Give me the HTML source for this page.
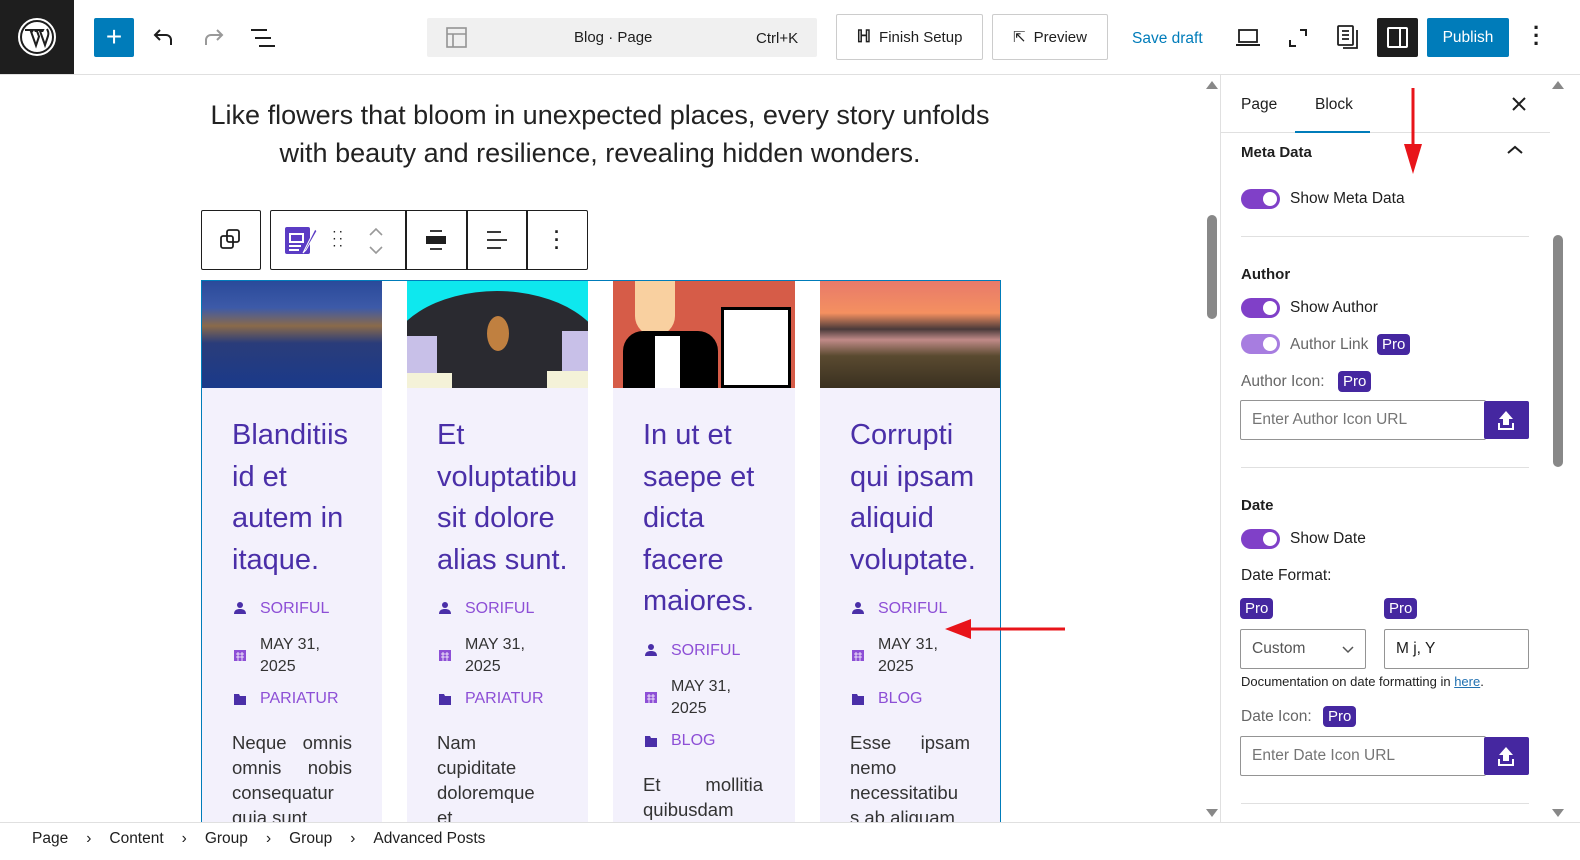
<!DOCTYPE html>
<html><head><meta charset="utf-8"><style>
*{box-sizing:border-box;margin:0;padding:0}
body{width:1580px;height:860px;overflow:hidden;background:#fff;font-family:"Liberation Sans",sans-serif;color:#1e1e1e;position:relative}
.a{position:absolute}
.btn{position:absolute;border:1px solid #ccc;border-radius:2px;font-size:15px;display:flex;align-items:center;justify-content:center;gap:8px;color:#1e1e1e}
.card{position:absolute;top:281px;height:541px;background:#f3f1fc;overflow:hidden}
.img{height:107px;width:100%;position:relative;overflow:hidden}
.t{position:absolute;left:30px;font-size:29px;line-height:41.5px;color:#4a2fa8;white-space:nowrap}
.m{position:absolute;left:58px;font-size:16px;color:#8d4fd6;line-height:20px}
.d{color:#333}
.ic{position:absolute;left:31px;width:14px;height:12px}
.ex{position:absolute;left:30px;width:120px;font-size:18.5px;line-height:25px;color:#333;text-align:justify;overflow-wrap:anywhere}
.tog{position:absolute;left:1241px;width:39px;height:20px;border-radius:10px;background:#8040c8}
.tog:after{content:"";position:absolute;right:3px;top:3px;width:14px;height:14px;border-radius:50%;background:#fff}
.sl{position:absolute;left:1290px;font-size:15.5px;color:#1e1e1e}
.h{position:absolute;left:1241px;font-size:15px;font-weight:bold;color:#1e1e1e}
.pro{position:absolute;background:#4527a0;color:#fff;font-size:15px;border-radius:4px;padding:1px 5px;line-height:19px}
.inp{position:absolute;border:1px solid #949494;border-radius:2px;font-size:15.5px;color:#757575;padding-left:11px;display:flex;align-items:center;background:#fff}
.up{position:absolute;width:45px;height:38px;background:#4527a0;border-radius:2px}
.sep{position:absolute;left:1241px;width:288px;height:1px;background:#e0e0e0}
</style></head><body>
<!-- top bar -->
<div class="a" style="left:0;top:0;width:74px;height:74px;background:#1e1e1e"></div>
<svg class="a" style="left:17px;top:17px" width="40" height="40" viewBox="0 0 40 40"><circle cx="20" cy="20" r="18" fill="none" stroke="#fff" stroke-width="2"/><circle cx="20" cy="20" r="15" fill="#fff"/><path d="M8 13h8l-1 1.5h-1l5 14 3-9-2-5.5h-1.5l-.5-1h8l-.5 1H23l5 14 3-9c1-3 0-5-1-7" fill="none" stroke="#1e1e1e" stroke-width="2"/></svg>
<div class="a" style="left:0;top:74px;width:1580px;height:1px;background:#e0e0e0"></div>
<div class="a" style="left:94px;top:18px;width:40px;height:39px;background:#007cba;border-radius:2px;color:#fff;font-size:28px;text-align:center;line-height:37px">+</div>
<svg class="a" style="left:152px;top:27px" width="24" height="22" viewBox="0 0 24 22"><path d="M8 3L3 8l5 5M3 8h11a5 5 0 0 1 5 5v5" fill="none" stroke="#1e1e1e" stroke-width="2"/></svg>
<svg class="a" style="left:201px;top:27px" width="24" height="22" viewBox="0 0 24 22"><path d="M16 3l5 5-5 5M21 8H10a5 5 0 0 0-5 5v5" fill="none" stroke="#999" stroke-width="2"/></svg>
<svg class="a" style="left:250px;top:28px" width="26" height="20" viewBox="0 0 26 20"><path d="M1 2h16M5 10h16M9 18h16" stroke="#1e1e1e" stroke-width="2"/></svg>
<div class="a" style="left:427px;top:18px;width:390px;height:39px;background:#f0f0f0;border-radius:2px"></div>
<svg class="a" style="left:446px;top:27px" width="22" height="22" viewBox="0 0 22 22"><rect x="1" y="1" width="19" height="19" fill="none" stroke="#949494" stroke-width="1.6"/><path d="M1 7h19M7 7v13" stroke="#949494" stroke-width="1.6"/></svg>
<div class="a" style="left:574px;top:29px;font-size:15px">Blog · Page</div>
<div class="a" style="left:756px;top:30px;font-size:15px">Ctrl+K</div>
<div class="btn" style="left:836px;top:14px;width:147px;height:46px"><span style="font-weight:bold;font-size:17px">ℍ</span>Finish Setup</div>
<div class="btn" style="left:992px;top:14px;width:116px;height:46px"><span style="font-size:15px">⇱</span>Preview</div>
<div class="a" style="left:1132px;top:30px;font-size:15.5px;color:#007cba">Save draft</div>
<svg class="a" style="left:1236px;top:28px" width="24" height="20" viewBox="0 0 24 20"><rect x="3" y="2" width="18" height="12" fill="none" stroke="#1e1e1e" stroke-width="1.8"/><path d="M0 17h24" stroke="#1e1e1e" stroke-width="2"/></svg>
<svg class="a" style="left:1288px;top:28px" width="20" height="20" viewBox="0 0 20 20"><path d="M12 2h6v6M8 18H2v-6" fill="none" stroke="#1e1e1e" stroke-width="2"/></svg>
<svg class="a" style="left:1336px;top:25px" width="24" height="26" viewBox="0 0 24 26"><rect x="2" y="1" width="15" height="19" rx="1" fill="none" stroke="#1e1e1e" stroke-width="1.8"/><path d="M6 6h7M6 10h7M6 14h7M21 5v18H7" fill="none" stroke="#1e1e1e" stroke-width="1.8"/></svg>
<div class="a" style="left:1377px;top:18px;width:41px;height:39px;background:#1e1e1e;border-radius:2px"></div>
<svg class="a" style="left:1387px;top:27px" width="22" height="22" viewBox="0 0 22 22"><rect x="1" y="1" width="19" height="19" rx="1" fill="none" stroke="#fff" stroke-width="2"/><path d="M13 1v19" stroke="#fff" stroke-width="2"/></svg>
<div class="a" style="left:1427px;top:18px;width:82px;height:39px;background:#007cba;border-radius:2px;color:#fff;font-size:15.5px;text-align:center;line-height:39px">Publish</div>
<div class="a" style="left:1533px;top:24px;font-size:22px;font-weight:bold;line-height:8px">·<br>·<br>·</div>

<!-- canvas -->
<div class="a" style="left:150px;top:96px;width:900px;text-align:center;font-size:27px;line-height:38px;color:#222">Like flowers that bloom in unexpected places, every story unfolds<br>with beauty and resilience, revealing hidden wonders.</div>
<div class="a" style="left:201px;top:210px;width:60px;height:60px;border:1.5px solid #1e1e1e;border-radius:2px"></div>
<svg class="a" style="left:220px;top:229px" width="22" height="22" viewBox="0 0 22 22"><rect x="1" y="7" width="12" height="12" rx="2" fill="none" stroke="#1e1e1e" stroke-width="1.8"/><rect x="7" y="1" width="12" height="12" rx="2" fill="none" stroke="#1e1e1e" stroke-width="1.8"/></svg>
<div class="a" style="left:270px;top:210px;width:318px;height:60px;border:1.5px solid #1e1e1e;border-radius:2px"></div>
<div class="a" style="left:405px;top:211px;width:1.5px;height:58px;background:#1e1e1e"></div>
<div class="a" style="left:466px;top:211px;width:1.5px;height:58px;background:#1e1e1e"></div>
<div class="a" style="left:526px;top:211px;width:1.5px;height:58px;background:#1e1e1e"></div>
<svg class="a" style="left:285px;top:225px" width="32" height="30" viewBox="0 0 32 30"><rect x="0" y="2" width="25" height="27" rx="2" fill="#5b3cc4"/><rect x="4" y="8" width="15" height="10" fill="#fff"/><rect x="6" y="10" width="11" height="6" fill="#5b3cc4"/><path d="M4 21h12M4 25h10" stroke="#fff" stroke-width="2"/><path d="M30 4L20 24l-2 4 3-3 11-19z" fill="#5b3cc4" stroke="#fff" stroke-width="1"/></svg>
<div class="a" style="left:333px;top:229px;font-size:10px;line-height:7px;letter-spacing:3px;font-weight:bold">··<br>··<br>··</div>
<svg class="a" style="left:367px;top:226px" width="18" height="30" viewBox="0 0 18 30"><path d="M3 9l6-6 6 6M3 21l6 6 6-6" fill="none" stroke="#999" stroke-width="1.6"/></svg>
<svg class="a" style="left:425px;top:229px" width="22" height="22" viewBox="0 0 22 22"><path d="M5 2h12M5 20h12" stroke="#1e1e1e" stroke-width="1.8"/><rect x="1" y="7" width="20" height="8" fill="#1e1e1e"/></svg>
<svg class="a" style="left:486px;top:229px" width="22" height="22" viewBox="0 0 22 22"><path d="M1 3h14M1 11h20M1 19h14" stroke="#1e1e1e" stroke-width="1.8"/></svg>
<div class="a" style="left:554px;top:228px;font-size:18px;line-height:8px;font-weight:bold">·<br>·<br>·</div>

<div class="a" style="left:201px;top:280px;width:800px;height:542px;border:1.5px solid #007cba;border-bottom:none"></div>

<div class="card" style="left:202px;width:180px">
 <div class="img" style="background:linear-gradient(180deg,#2a4a9a 0%,#3d5aa8 25%,#8a6a4a 42%,#2a3c7a 58%,#1a3a8a 100%)"></div>
 <div class="t" style="top:134px">Blanditiis<br>id et<br>autem in<br>itaque.</div>
 <svg class="ic" style="top:321px" viewBox="0 0 14 12"><circle cx="7" cy="3" r="3" fill="#4a2fa8"/><path d="M1 12c0-4 3-5 6-5s6 1 6 5z" fill="#4a2fa8"/></svg><div class="m" style="top:318px">SORIFUL</div>
 <svg class="ic" style="top:368px" viewBox="0 0 14 12"><rect x="1" y="1" width="12" height="11" fill="#8d4fd6"/><path d="M3 5h8M3 8h8M5 3v9M9 3v9" stroke="#fff" stroke-width=".8"/></svg><div class="m d" style="top:353px;line-height:22px">MAY 31,<br>2025</div>
 <svg class="ic" style="top:412px" viewBox="0 0 14 12"><path d="M1 1h5l1 2h6v9H1z" fill="#4a2fa8"/></svg><div class="m" style="top:408px">PARIATUR</div>
 <div class="ex" style="top:449px">Neque omnis omnis nobis consequatur quia sunt</div>
</div>
<div class="card" style="left:407px;width:181px">
 <div class="img" style="background:#0ee8ee">
  <div class="a" style="left:-20px;top:10px;width:220px;height:140px;background:#2a2a30;border-radius:50%"></div>
  <div class="a" style="left:0;top:55px;width:30px;height:45px;background:#c8c0e8"></div>
  <div class="a" style="left:155px;top:50px;width:26px;height:45px;background:#c8c0e8"></div>
  <div class="a" style="left:0;top:92px;width:45px;height:15px;background:#f4f2d8"></div>
  <div class="a" style="left:140px;top:90px;width:41px;height:17px;background:#f4f2d8"></div>
  <div class="a" style="left:80px;top:35px;width:22px;height:35px;background:#c08040;border-radius:50%"></div>
 </div>
 <div class="t" style="top:134px">Et<br>voluptatibu<br>sit dolore<br>alias sunt.</div>
 <svg class="ic" style="top:321px" viewBox="0 0 14 12"><circle cx="7" cy="3" r="3" fill="#4a2fa8"/><path d="M1 12c0-4 3-5 6-5s6 1 6 5z" fill="#4a2fa8"/></svg><div class="m" style="top:318px">SORIFUL</div>
 <svg class="ic" style="top:368px" viewBox="0 0 14 12"><rect x="1" y="1" width="12" height="11" fill="#8d4fd6"/><path d="M3 5h8M3 8h8M5 3v9M9 3v9" stroke="#fff" stroke-width=".8"/></svg><div class="m d" style="top:353px;line-height:22px">MAY 31,<br>2025</div>
 <svg class="ic" style="top:412px" viewBox="0 0 14 12"><path d="M1 1h5l1 2h6v9H1z" fill="#4a2fa8"/></svg><div class="m" style="top:408px">PARIATUR</div>
 <div class="ex" style="top:449px;text-align:left">Nam<br>cupiditate<br>doloremque<br>et</div>
</div>
<div class="card" style="left:613px;width:182px">
 <div class="img" style="background:#d65c48">
  <div class="a" style="left:22px;top:0;width:40px;height:55px;background:#f9d0a0;border-radius:0 0 20px 20px"></div>
  <div class="a" style="left:10px;top:50px;width:95px;height:57px;background:#000;border-radius:20px 20px 0 0"></div>
  <div class="a" style="left:42px;top:55px;width:25px;height:52px;background:#fff"></div>
  <div class="a" style="left:108px;top:26px;width:70px;height:81px;background:#fff;border:3px solid #000"></div>
 </div>
 <div class="t" style="top:134px">In ut et<br>saepe et<br>dicta<br>facere<br>maiores.</div>
 <svg class="ic" style="top:363px" viewBox="0 0 14 12"><circle cx="7" cy="3" r="3" fill="#4a2fa8"/><path d="M1 12c0-4 3-5 6-5s6 1 6 5z" fill="#4a2fa8"/></svg><div class="m" style="top:360px">SORIFUL</div>
 <svg class="ic" style="top:410px" viewBox="0 0 14 12"><rect x="1" y="1" width="12" height="11" fill="#8d4fd6"/><path d="M3 5h8M3 8h8M5 3v9M9 3v9" stroke="#fff" stroke-width=".8"/></svg><div class="m d" style="top:395px;line-height:22px">MAY 31,<br>2025</div>
 <svg class="ic" style="top:454px" viewBox="0 0 14 12"><path d="M1 1h5l1 2h6v9H1z" fill="#4a2fa8"/></svg><div class="m" style="top:450px">BLOG</div>
 <div class="ex" style="top:491px">Et mollitia quibusdam</div>
</div>
<div class="card" style="left:820px;width:180px">
 <div class="img" style="background:linear-gradient(180deg,#e87a6a 0%,#f49060 30%,#4a3a3a 45%,#c08a88 55%,#5a4a30 70%,#3a3020 100%)"></div>
 <div class="t" style="top:134px">Corrupti<br>qui ipsam<br>aliquid<br>voluptate.</div>
 <svg class="ic" style="top:321px" viewBox="0 0 14 12"><circle cx="7" cy="3" r="3" fill="#4a2fa8"/><path d="M1 12c0-4 3-5 6-5s6 1 6 5z" fill="#4a2fa8"/></svg><div class="m" style="top:318px">SORIFUL</div>
 <svg class="ic" style="top:368px" viewBox="0 0 14 12"><rect x="1" y="1" width="12" height="11" fill="#8d4fd6"/><path d="M3 5h8M3 8h8M5 3v9M9 3v9" stroke="#fff" stroke-width=".8"/></svg><div class="m d" style="top:353px;line-height:22px">MAY 31,<br>2025</div>
 <svg class="ic" style="top:412px" viewBox="0 0 14 12"><path d="M1 1h5l1 2h6v9H1z" fill="#4a2fa8"/></svg><div class="m" style="top:408px">BLOG</div>
 <div class="ex" style="top:449px">Esse ipsam nemo necessitatibu s ab aliquam</div>
</div>
<!-- red arrow -->
<svg class="a" style="left:945px;top:617px" width="122" height="24" viewBox="0 0 122 24"><path d="M120 12H20" stroke="#e8141a" stroke-width="3"/><path d="M0 12l26-10v20z" fill="#e8141a"/></svg>

<!-- canvas scrollbar -->
<svg class="a" style="left:1205px;top:80px" width="14" height="10"><path d="M1 9l6-8 6 8z" fill="#888"/></svg>
<div class="a" style="left:1207px;top:215px;width:10px;height:104px;background:#888;border-radius:5px"></div>
<svg class="a" style="left:1205px;top:808px" width="14" height="10"><path d="M1 1l6 8 6-8z" fill="#888"/></svg>
<div class="a" style="left:1220px;top:75px;width:1px;height:747px;background:#e0e0e0"></div>

<!-- sidebar -->
<div class="a" style="left:1241px;top:96px;font-size:15.5px">Page</div>
<div class="a" style="left:1315px;top:96px;font-size:15.5px">Block</div>
<div class="a" style="left:1221px;top:132px;width:329px;height:1px;background:#e0e0e0"></div>
<div class="a" style="left:1295px;top:131px;width:75px;height:2px;background:#007cba"></div>
<svg class="a" style="left:1512px;top:97px" width="14" height="14"><path d="M1 1l12 12M13 1L1 13" stroke="#1e1e1e" stroke-width="2"/></svg>
<svg class="a" style="left:1403px;top:88px" width="20" height="86"><path d="M10 0v60" stroke="#e8141a" stroke-width="3"/><path d="M1 56h18l-9 30z" fill="#e8141a"/></svg>
<div class="h" style="top:144px">Meta Data</div>
<svg class="a" style="left:1507px;top:145px" width="16" height="10"><path d="M1 8l7-6 7 6" fill="none" stroke="#1e1e1e" stroke-width="2"/></svg>
<div class="tog" style="top:189px"></div><div class="sl" style="top:190px">Show Meta Data</div>
<div class="sep" style="top:236px"></div>
<div class="h" style="top:266px">Author</div>
<div class="tog" style="top:298px"></div><div class="sl" style="top:299px">Show Author</div>
<div class="tog" style="top:334px;background:#a77de0"></div><div class="sl" style="top:336px;color:#666">Author Link</div>
<div class="pro" style="left:1377px;top:334px">Pro</div>
<div class="sl" style="left:1241px;top:373px;color:#666">Author Icon:</div>
<div class="pro" style="left:1338px;top:371px">Pro</div>
<div class="inp" style="left:1240px;top:400px;width:246px;height:40px">Enter Author Icon URL</div>
<div class="up" style="left:1484px;top:401px"><svg width="45" height="38"><path d="M22 10l-7 8h4v6h6v-6h4z" fill="#fff"/><path d="M15 22v6h14v-6" fill="none" stroke="#fff" stroke-width="2"/></svg></div>
<div class="sep" style="top:467px"></div>
<div class="h" style="top:497px">Date</div>
<div class="tog" style="top:529px"></div><div class="sl" style="top:530px">Show Date</div>
<div class="sl" style="left:1241px;top:567px">Date Format:</div>
<div class="pro" style="left:1240px;top:598px">Pro</div>
<div class="pro" style="left:1384px;top:598px">Pro</div>
<div class="inp" style="left:1240px;top:629px;width:126px;height:40px;color:#555">Custom</div>
<svg class="a" style="left:1342px;top:646px" width="12" height="8"><path d="M1 1l5 5 5-5" fill="none" stroke="#555" stroke-width="1.5"/></svg>
<div class="inp" style="left:1384px;top:629px;width:145px;height:40px;color:#1e1e1e">M j, Y</div>
<div class="a" style="left:1241px;top:674px;font-size:13px">Documentation on date formatting in <span style="color:#2271b1;text-decoration:underline">here</span>.</div>
<div class="sl" style="left:1241px;top:708px;color:#666">Date Icon:</div>
<div class="pro" style="left:1323px;top:706px">Pro</div>
<div class="inp" style="left:1240px;top:736px;width:246px;height:40px">Enter Date Icon URL</div>
<div class="up" style="left:1484px;top:737px"><svg width="45" height="38"><path d="M22 10l-7 8h4v6h6v-6h4z" fill="#fff"/><path d="M15 22v6h14v-6" fill="none" stroke="#fff" stroke-width="2"/></svg></div>
<div class="sep" style="top:803px"></div>
<svg class="a" style="left:1551px;top:80px" width="14" height="10"><path d="M1 9l6-8 6 8z" fill="#888"/></svg>
<div class="a" style="left:1553px;top:235px;width:10px;height:232px;background:#888;border-radius:5px"></div>
<svg class="a" style="left:1551px;top:808px" width="14" height="10"><path d="M1 1l6 8 6-8z" fill="#888"/></svg>

<!-- footer -->
<div class="a" style="left:0;top:822px;width:1580px;height:38px;background:#fff;border-top:1px solid #e0e0e0"></div>
<div class="a" style="left:32px;top:830px;font-size:15.5px">Page<span style="margin:0 18px">›</span>Content<span style="margin:0 18px">›</span>Group<span style="margin:0 18px">›</span>Group<span style="margin:0 18px">›</span>Advanced Posts</div>
</body></html>
